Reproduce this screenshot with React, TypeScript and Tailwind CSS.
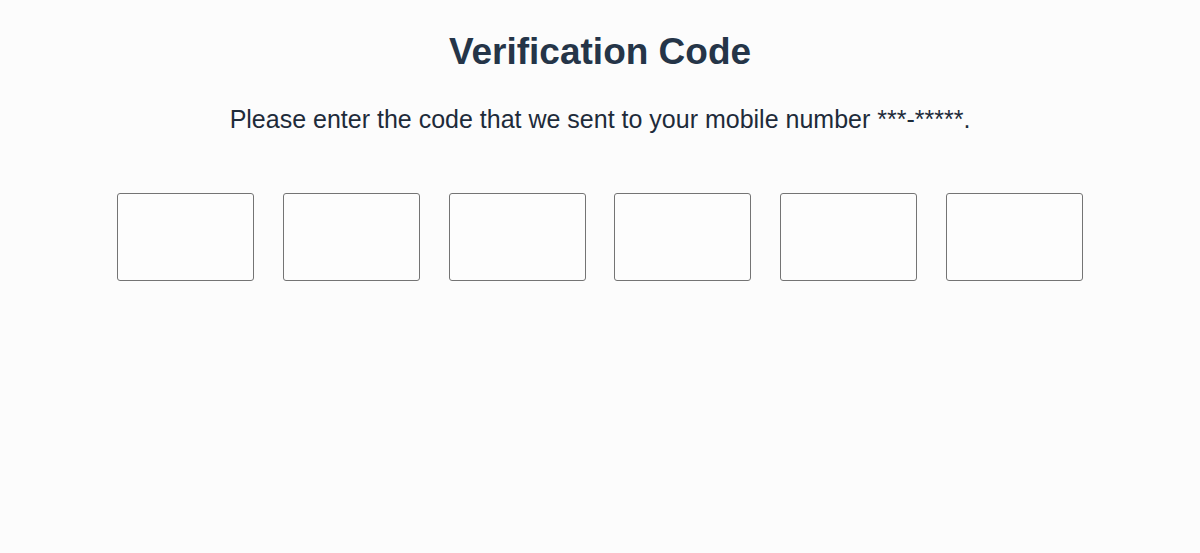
export default function App() {
  const digits = [0, 1, 2, 3, 4, 5];
  return (
    <div className="min-h-[553px] w-full bg-[#fcfcfc] font-['Liberation_Sans',Arial,sans-serif]">
      <div className="flex flex-col items-center pt-[30px]">
        <h1 className="text-[37px] font-bold leading-[43px] text-[#253548]">
          Verification Code
        </h1>
        <p className="mt-[31px] text-[25px] leading-[30px] text-[#1e2b3a]">
          Please enter the code that we sent to your mobile number ***-*****.
        </p>
        <div className="mt-[59px] flex gap-[28.8px]">
          {digits.map((d) => (
            <input
              key={d}
              type="text"
              maxLength={1}
              aria-label={`Digit ${d + 1}`}
              className="h-[88px] w-[137px] rounded-[3px] border border-[#747474] bg-[#fdfdfd] text-center text-[32px] text-[#1e2b3a] outline-none"
            />
          ))}
        </div>
      </div>
    </div>
  );
}
